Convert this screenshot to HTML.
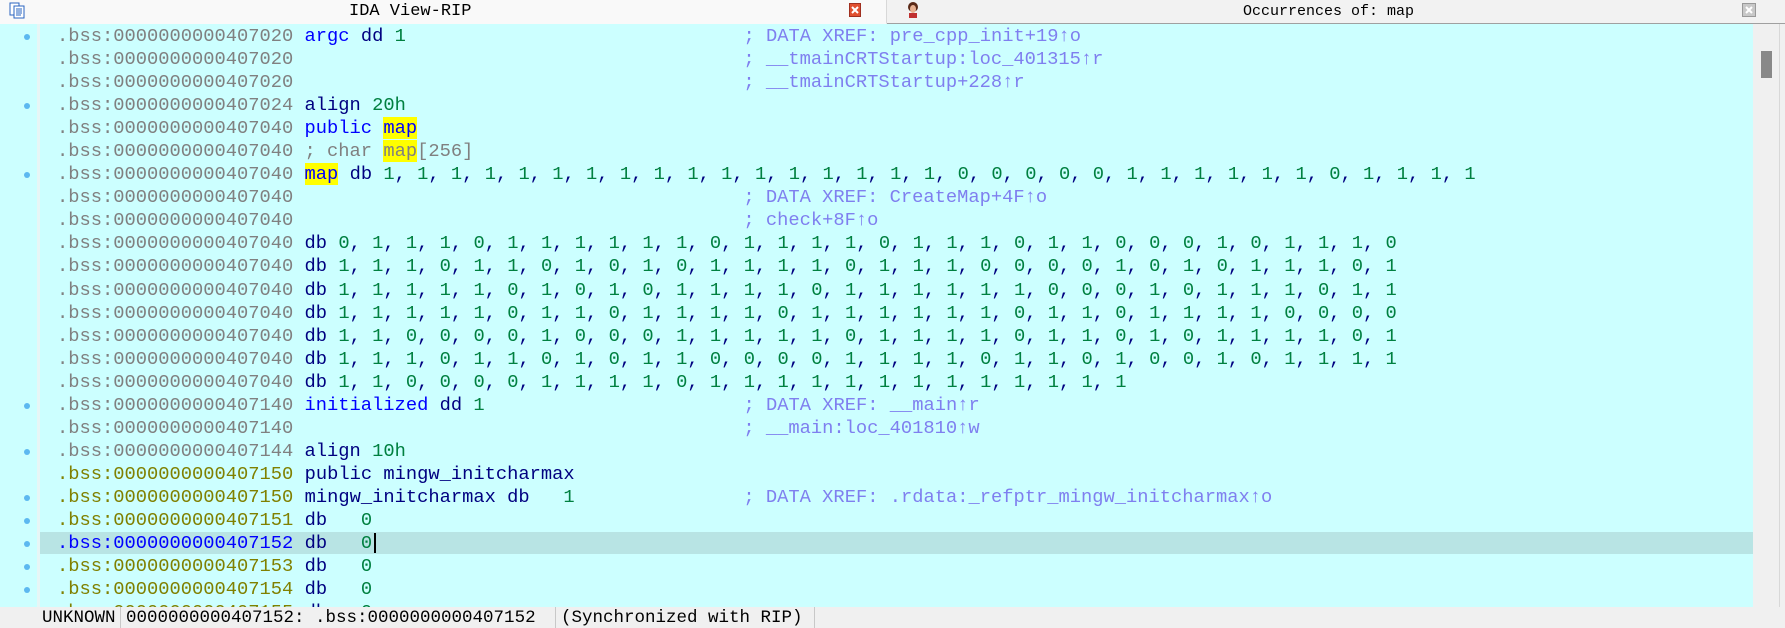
<!DOCTYPE html>
<html><head><meta charset="utf-8"><style>
*{margin:0;padding:0;box-sizing:border-box}
body{width:1785px;height:628px;overflow:hidden;background:#f0f0f0;position:relative;font-family:"Liberation Mono",monospace}
#tabs{position:absolute;left:0;top:0;width:1785px;height:24px;background:#f2f2f2;border-bottom:1px solid #a0a0a0}
#tab1{position:absolute;left:0;top:0;width:887px;height:24px;background:#f9f9f9;border-bottom:1px solid #f9f9f9;border-right:1px solid #d8d8d8}
.tt{position:absolute;top:2px;font-family:"Liberation Mono",monospace;color:#000}
#view{position:absolute;left:0;top:24px;width:1753px;height:583px;background:#ccffff;overflow:hidden}
#strip{position:absolute;left:37px;top:0;width:3px;height:583px;background:#e6f6f6}
pre{position:absolute;left:57px;top:1px;font-family:"Liberation Mono",monospace;font-size:18.75px;line-height:23.04px;color:#808080;white-space:pre}
.o{color:#808000}.k{color:#0000ff}.n{color:#000080}.g{color:#008040}.c{color:#7f7fef}.y{background:#ffff00}
.dot{position:absolute;left:24px;width:6px;height:6px;border-radius:50%;background:#5cb8f0}
#hl{position:absolute;left:40px;top:508px;width:1713px;height:22px;background:#b8e4e4}
#cur{position:absolute;left:374px;top:509px;width:2px;height:20px;background:#000}
#sb{position:absolute;left:1753px;top:24px;width:27px;height:583px;background:#f0f0f0;border-right:1px solid #d8d8d8}
#thumb{position:absolute;left:8px;top:27px;width:11px;height:27px;background:#888}
#status{position:absolute;left:0;top:607px;width:1785px;height:21px;background:#f0f0f0;font-size:17.5px;color:#000}
#status span{position:absolute;top:1px;font-family:"Liberation Mono",monospace}
.sep{position:absolute;top:0;width:1px;height:21px;background:#c8c8c8}
</style></head><body>
<div id="tabs">
 <div id="tab1">
  <svg style="position:absolute;left:9px;top:2px" width="17" height="17" viewBox="0 0 17 17"><rect x="1" y="1" width="9" height="12" fill="#fff" stroke="#2a64c0"/><rect x="5" y="4" width="10" height="12" fill="#fff" stroke="#2a64c0"/><path d="M7 7h6M7 9h6M7 11h6M7 13h5" stroke="#2a64c0"/></svg>
  <div class="tt" style="left:349px;font-size:17px">IDA View-RIP</div>
  <svg style="position:absolute;left:849px;top:3px" width="12" height="14"><rect x="0.5" y="0.5" width="11" height="13" fill="#e05030" stroke="#a03020"/><path d="M3 4l6 6M9 4l-6 6" stroke="#fff" stroke-width="2"/></svg>
 </div>
 <svg style="position:absolute;left:906px;top:1px" width="14" height="17"><ellipse cx="7" cy="6" rx="5" ry="5" fill="#5a2a18"/><ellipse cx="7" cy="8" rx="3" ry="4" fill="#e8b090"/><rect x="3" y="12" width="8" height="5" fill="#c03030"/></svg>
 <div class="tt" style="left:1243px;font-size:15px;top:3px">Occurrences of: map</div>
 <svg style="position:absolute;left:1742px;top:3px" width="14" height="14"><rect x="0.5" y="0.5" width="13" height="13" fill="#c8c8c8" stroke="#999"/><path d="M4 4l6 6M10 4l-6 6" stroke="#fff" stroke-width="2"/></svg>
</div>
<div id="view">
<div id="strip"></div>
<div id="hl"></div>
<div class="dot" style="top:10px"></div>
<div class="dot" style="top:79px"></div>
<div class="dot" style="top:148px"></div>
<div class="dot" style="top:379px"></div>
<div class="dot" style="top:425px"></div>
<div class="dot" style="top:471px"></div>
<div class="dot" style="top:494px"></div>
<div class="dot" style="top:517px"></div>
<div class="dot" style="top:540px"></div>
<div class="dot" style="top:563px"></div>
<pre>.bss:0000000000407020 <span class="k">argc</span> <span class="n">dd</span> <span class="g">1</span>                              <span class="c">; DATA XREF: pre_cpp_init+19↑o</span>
.bss:0000000000407020                                        <span class="c">; __tmainCRTStartup:loc_401315↑r</span>
.bss:0000000000407020                                        <span class="c">; __tmainCRTStartup+228↑r</span>
.bss:0000000000407024 <span class="n">align</span> <span class="g">20h</span>
.bss:0000000000407040 <span class="k">public</span> <span class="k y">map</span>
.bss:0000000000407040 ; char <span class="y">map</span>[256]
.bss:0000000000407040 <span class="k y">map</span> <span class="n">db <span class="g">1</span>, <span class="g">1</span>, <span class="g">1</span>, <span class="g">1</span>, <span class="g">1</span>, <span class="g">1</span>, <span class="g">1</span>, <span class="g">1</span>, <span class="g">1</span>, <span class="g">1</span>, <span class="g">1</span>, <span class="g">1</span>, <span class="g">1</span>, <span class="g">1</span>, <span class="g">1</span>, <span class="g">1</span>, <span class="g">1</span>, <span class="g">0</span>, <span class="g">0</span>, <span class="g">0</span>, <span class="g">0</span>, <span class="g">0</span>, <span class="g">1</span>, <span class="g">1</span>, <span class="g">1</span>, <span class="g">1</span>, <span class="g">1</span>, <span class="g">1</span>, <span class="g">0</span>, <span class="g">1</span>, <span class="g">1</span>, <span class="g">1</span>, <span class="g">1</span></span>
.bss:0000000000407040                                        <span class="c">; DATA XREF: CreateMap+4F↑o</span>
.bss:0000000000407040                                        <span class="c">; check+8F↑o</span>
.bss:0000000000407040 <span class="n">db <span class="g">0</span>, <span class="g">1</span>, <span class="g">1</span>, <span class="g">1</span>, <span class="g">0</span>, <span class="g">1</span>, <span class="g">1</span>, <span class="g">1</span>, <span class="g">1</span>, <span class="g">1</span>, <span class="g">1</span>, <span class="g">0</span>, <span class="g">1</span>, <span class="g">1</span>, <span class="g">1</span>, <span class="g">1</span>, <span class="g">0</span>, <span class="g">1</span>, <span class="g">1</span>, <span class="g">1</span>, <span class="g">0</span>, <span class="g">1</span>, <span class="g">1</span>, <span class="g">0</span>, <span class="g">0</span>, <span class="g">0</span>, <span class="g">1</span>, <span class="g">0</span>, <span class="g">1</span>, <span class="g">1</span>, <span class="g">1</span>, <span class="g">0</span></span>
.bss:0000000000407040 <span class="n">db <span class="g">1</span>, <span class="g">1</span>, <span class="g">1</span>, <span class="g">0</span>, <span class="g">1</span>, <span class="g">1</span>, <span class="g">0</span>, <span class="g">1</span>, <span class="g">0</span>, <span class="g">1</span>, <span class="g">0</span>, <span class="g">1</span>, <span class="g">1</span>, <span class="g">1</span>, <span class="g">1</span>, <span class="g">0</span>, <span class="g">1</span>, <span class="g">1</span>, <span class="g">1</span>, <span class="g">0</span>, <span class="g">0</span>, <span class="g">0</span>, <span class="g">0</span>, <span class="g">1</span>, <span class="g">0</span>, <span class="g">1</span>, <span class="g">0</span>, <span class="g">1</span>, <span class="g">1</span>, <span class="g">1</span>, <span class="g">0</span>, <span class="g">1</span></span>
.bss:0000000000407040 <span class="n">db <span class="g">1</span>, <span class="g">1</span>, <span class="g">1</span>, <span class="g">1</span>, <span class="g">1</span>, <span class="g">0</span>, <span class="g">1</span>, <span class="g">0</span>, <span class="g">1</span>, <span class="g">0</span>, <span class="g">1</span>, <span class="g">1</span>, <span class="g">1</span>, <span class="g">1</span>, <span class="g">0</span>, <span class="g">1</span>, <span class="g">1</span>, <span class="g">1</span>, <span class="g">1</span>, <span class="g">1</span>, <span class="g">1</span>, <span class="g">0</span>, <span class="g">0</span>, <span class="g">0</span>, <span class="g">1</span>, <span class="g">0</span>, <span class="g">1</span>, <span class="g">1</span>, <span class="g">1</span>, <span class="g">0</span>, <span class="g">1</span>, <span class="g">1</span></span>
.bss:0000000000407040 <span class="n">db <span class="g">1</span>, <span class="g">1</span>, <span class="g">1</span>, <span class="g">1</span>, <span class="g">1</span>, <span class="g">0</span>, <span class="g">1</span>, <span class="g">1</span>, <span class="g">0</span>, <span class="g">1</span>, <span class="g">1</span>, <span class="g">1</span>, <span class="g">1</span>, <span class="g">0</span>, <span class="g">1</span>, <span class="g">1</span>, <span class="g">1</span>, <span class="g">1</span>, <span class="g">1</span>, <span class="g">1</span>, <span class="g">0</span>, <span class="g">1</span>, <span class="g">1</span>, <span class="g">0</span>, <span class="g">1</span>, <span class="g">1</span>, <span class="g">1</span>, <span class="g">1</span>, <span class="g">0</span>, <span class="g">0</span>, <span class="g">0</span>, <span class="g">0</span></span>
.bss:0000000000407040 <span class="n">db <span class="g">1</span>, <span class="g">1</span>, <span class="g">0</span>, <span class="g">0</span>, <span class="g">0</span>, <span class="g">0</span>, <span class="g">1</span>, <span class="g">0</span>, <span class="g">0</span>, <span class="g">0</span>, <span class="g">1</span>, <span class="g">1</span>, <span class="g">1</span>, <span class="g">1</span>, <span class="g">1</span>, <span class="g">0</span>, <span class="g">1</span>, <span class="g">1</span>, <span class="g">1</span>, <span class="g">1</span>, <span class="g">0</span>, <span class="g">1</span>, <span class="g">1</span>, <span class="g">0</span>, <span class="g">1</span>, <span class="g">0</span>, <span class="g">1</span>, <span class="g">1</span>, <span class="g">1</span>, <span class="g">1</span>, <span class="g">0</span>, <span class="g">1</span></span>
.bss:0000000000407040 <span class="n">db <span class="g">1</span>, <span class="g">1</span>, <span class="g">1</span>, <span class="g">0</span>, <span class="g">1</span>, <span class="g">1</span>, <span class="g">0</span>, <span class="g">1</span>, <span class="g">0</span>, <span class="g">1</span>, <span class="g">1</span>, <span class="g">0</span>, <span class="g">0</span>, <span class="g">0</span>, <span class="g">0</span>, <span class="g">1</span>, <span class="g">1</span>, <span class="g">1</span>, <span class="g">1</span>, <span class="g">0</span>, <span class="g">1</span>, <span class="g">1</span>, <span class="g">0</span>, <span class="g">1</span>, <span class="g">0</span>, <span class="g">0</span>, <span class="g">1</span>, <span class="g">0</span>, <span class="g">1</span>, <span class="g">1</span>, <span class="g">1</span>, <span class="g">1</span></span>
.bss:0000000000407040 <span class="n">db <span class="g">1</span>, <span class="g">1</span>, <span class="g">0</span>, <span class="g">0</span>, <span class="g">0</span>, <span class="g">0</span>, <span class="g">1</span>, <span class="g">1</span>, <span class="g">1</span>, <span class="g">1</span>, <span class="g">0</span>, <span class="g">1</span>, <span class="g">1</span>, <span class="g">1</span>, <span class="g">1</span>, <span class="g">1</span>, <span class="g">1</span>, <span class="g">1</span>, <span class="g">1</span>, <span class="g">1</span>, <span class="g">1</span>, <span class="g">1</span>, <span class="g">1</span>, <span class="g">1</span></span>
.bss:0000000000407140 <span class="k">initialized</span> <span class="n">dd</span> <span class="g">1</span>                       <span class="c">; DATA XREF: __main↑r</span>
.bss:0000000000407140                                        <span class="c">; __main:loc_401810↑w</span>
.bss:0000000000407144 <span class="n">align</span> <span class="g">10h</span>
<span class="o">.bss:0000000000407150</span> <span class="n">public mingw_initcharmax</span>
<span class="o">.bss:0000000000407150</span> <span class="n">mingw_initcharmax db</span>   <span class="g">1</span>               <span class="c">; DATA XREF: .rdata:_refptr_mingw_initcharmax↑o</span>
<span class="o">.bss:0000000000407151</span> <span class="n">db</span>   <span class="g">0</span>
<span class="k">.bss:0000000000407152</span> <span class="n">db</span>   <span class="g">0</span>
<span class="o">.bss:0000000000407153</span> <span class="n">db</span>   <span class="g">0</span>
<span class="o">.bss:0000000000407154</span> <span class="n">db</span>   <span class="g">0</span>
<span class="o">.bss:0000000000407155</span> <span class="n">db</span>   <span class="g">0</span></pre>
<div id="cur"></div>
</div>
<div id="sb"><div id="thumb"></div></div>
<div id="status">
 <span style="left:42px">UNKNOWN</span><div class="sep" style="left:120px"></div>
 <span style="left:126px">0000000000407152: .bss:0000000000407152</span><div class="sep" style="left:555px"></div>
 <span style="left:561px">(Synchronized with RIP)</span><div class="sep" style="left:814px"></div>
</div>
</body></html>
